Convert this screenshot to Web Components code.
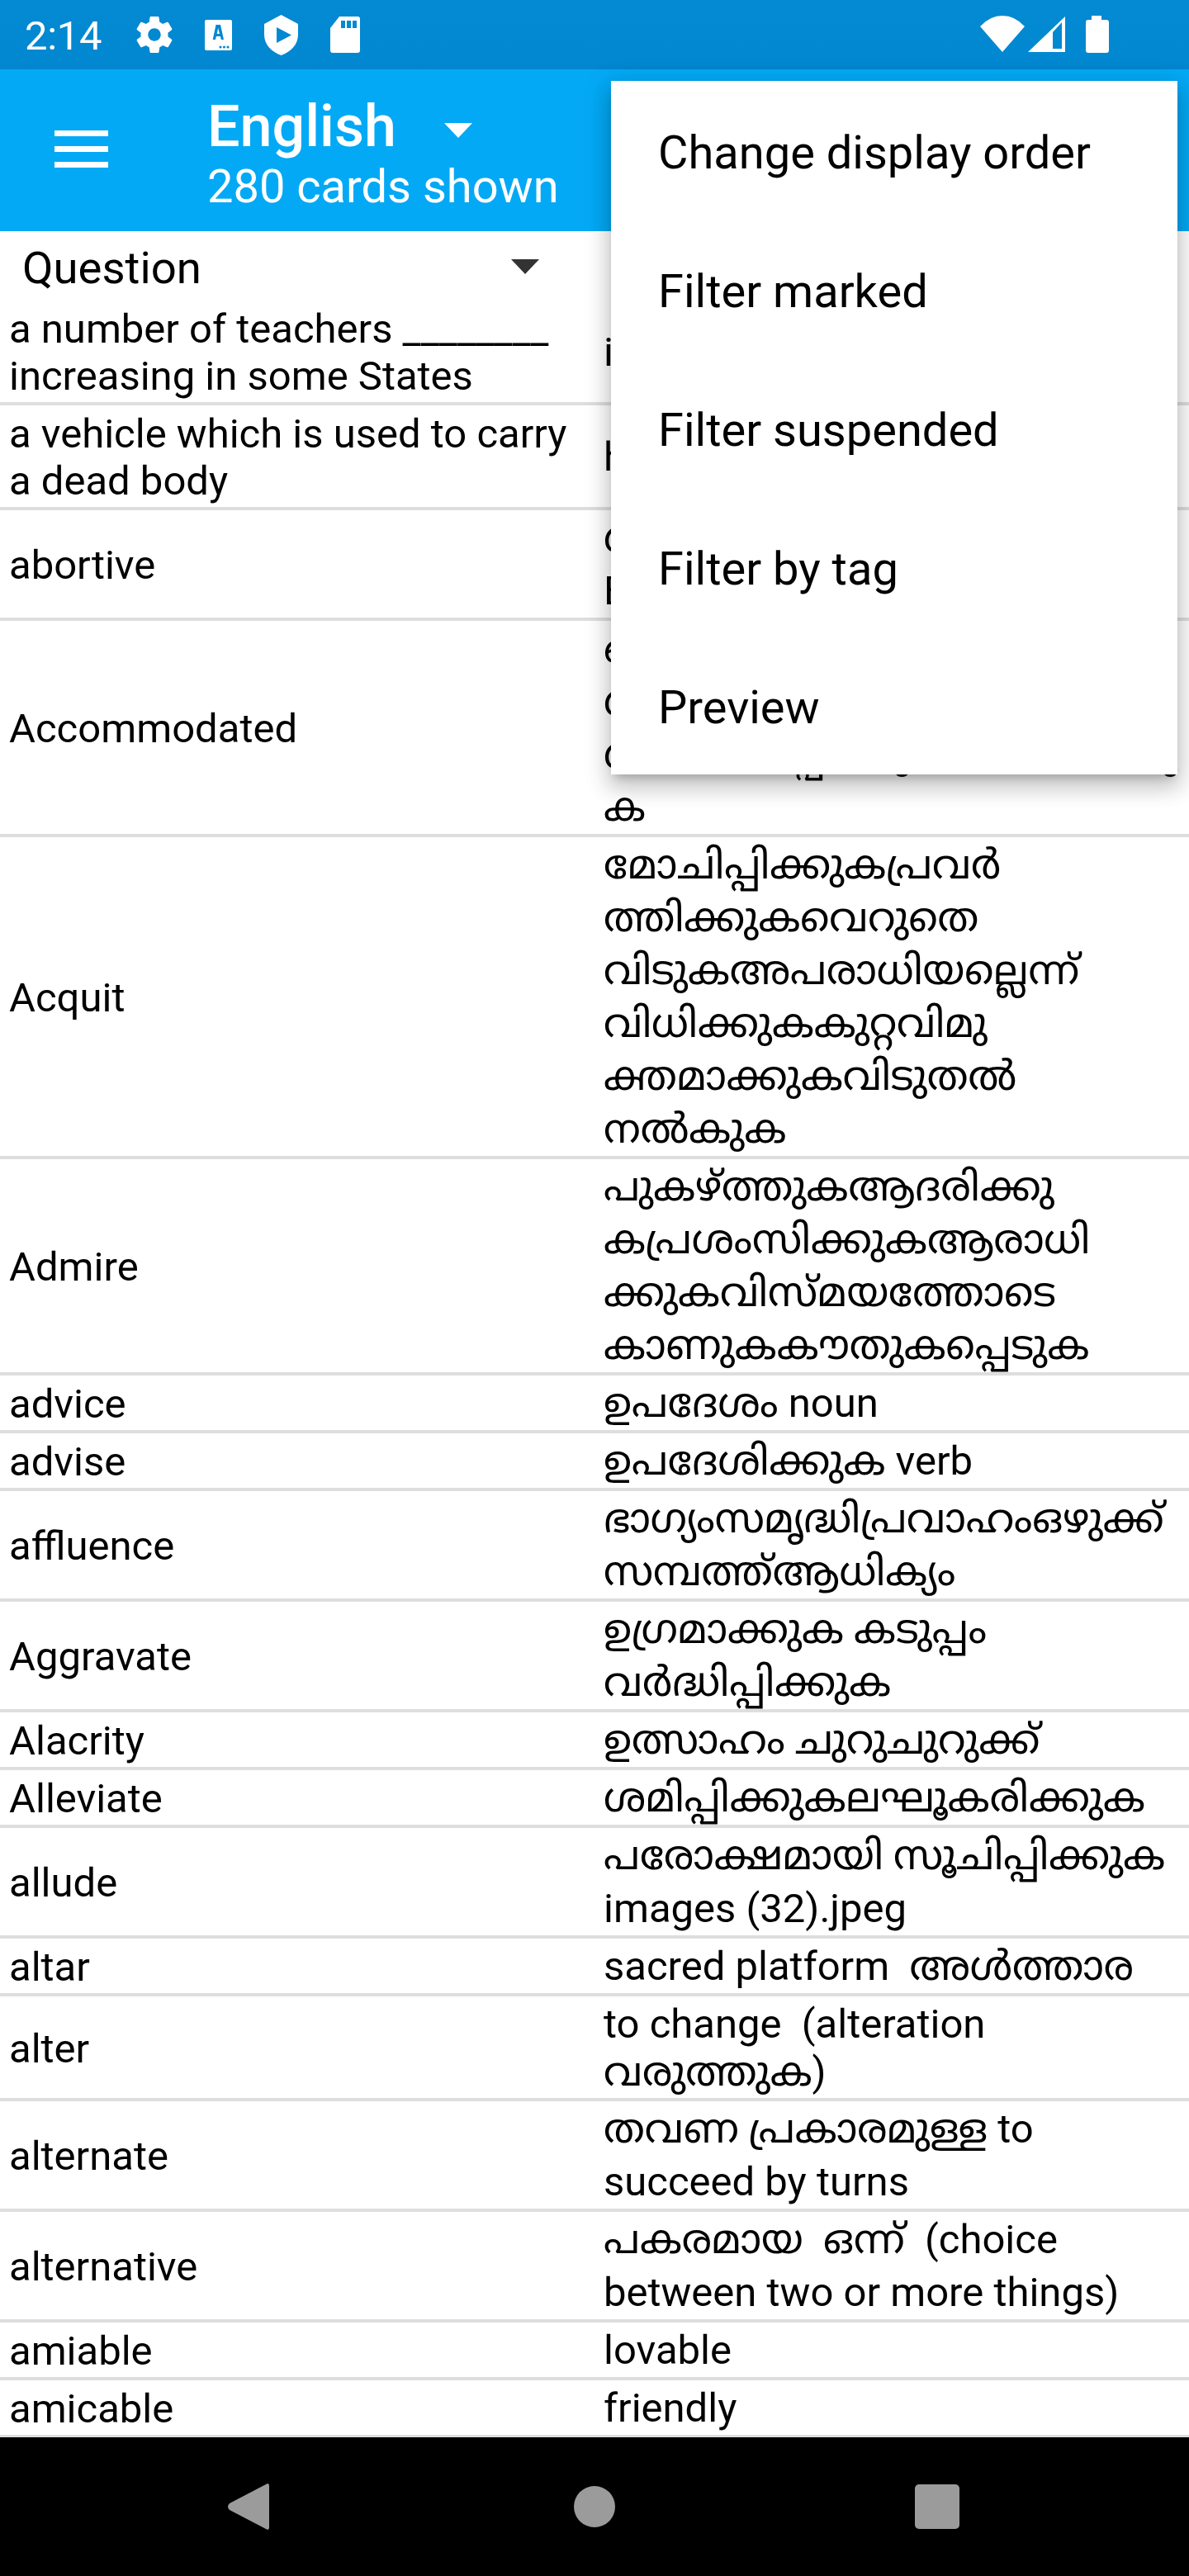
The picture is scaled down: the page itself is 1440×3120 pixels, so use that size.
<!doctype html><html lang="ml"><head><meta charset="utf-8"><style>
html,body{margin:0;width:1440px;height:3120px;background:#fff;overflow:hidden;font-family:Roboto,"Noto Sans Malayalam","Noto Sans",sans-serif;color:#000}
</style></head><body>
<x-phone>
  <x-status-bar></x-status-bar>
  <x-app-bar title="English" subtitle="280 cards shown"></x-app-bar>
  <x-column-header label="Question"></x-column-header>
  <x-card-list>
    <x-card-row style="--h:123px;--lh:57px"><span slot="q">a number of teachers ________<br>increasing in some States</span><span slot="a">is</span></x-card-row>
    <x-card-row style="--h:123px;--lh:57px"><span slot="q">a vehicle which is used to carry<br>a dead body</span><span slot="a">he</span></x-card-row>
    <x-card-row style="--h:130px;--lh:64px"><span slot="q">abortive</span><span slot="a">ഗ<br>E</span></x-card-row>
    <x-card-row style="--h:258px;--lh:64px"><span slot="q">Accommodated</span><span slot="a">ഒ<br>ഗ<br>ഗതാമസിപ്പിക്കുകസൗകര്ക്കു<br>ക</span></x-card-row>
    <x-card-row style="--h:386px;--lh:64px"><span slot="q">Acquit</span><span slot="a">മോചിപ്പിക്കുകപ്രവർ<br>ത്തിക്കുകവെറുതെ<br>വിടുകഅപരാധിയല്ലെന്ന്<br>വിധിക്കുകകുറ്റവിമു<br>ക്തമാക്കുകവിടുതൽ<br>നൽകുക</span></x-card-row>
    <x-card-row style="--h:258px;--lh:64px"><span slot="q">Admire</span><span slot="a">പുകഴ്ത്തുകആദരിക്കു<br>കപ്രശംസിക്കുകആരാധി<br>ക്കുകവിസ്മയത്തോടെ<br>കാണുകകൗതുകപ്പെടുക</span></x-card-row>
    <x-card-row style="--h:66px;--lh:64px"><span slot="q">advice</span><span slot="a">ഉപദേശം noun</span></x-card-row>
    <x-card-row style="--h:66px;--lh:64px"><span slot="q">advise</span><span slot="a">ഉപദേശിക്കുക verb</span></x-card-row>
    <x-card-row style="--h:130px;--lh:64px"><span slot="q">affluence</span><span slot="a">ഭാഗ്യംസമൃദ്ധിപ്രവാഹംഒഴുക്ക്<br>സമ്പത്ത്ആധിക്യം</span></x-card-row>
    <x-card-row style="--h:130px;--lh:64px"><span slot="q">Aggravate</span><span slot="a">ഉഗ്രമാക്കുക കടുപ്പം<br>വർദ്ധിപ്പിക്കുക</span></x-card-row>
    <x-card-row style="--h:66px;--lh:64px"><span slot="q">Alacrity</span><span slot="a">ഉത്സാഹം ചുറുചുറുക്ക്</span></x-card-row>
    <x-card-row style="--h:66px;--lh:64px"><span slot="q">Alleviate</span><span slot="a">ശമിപ്പിക്കുകലഘൂകരിക്കുക</span></x-card-row>
    <x-card-row style="--h:130px;--lh:64px"><span slot="q">allude</span><span slot="a">പരോക്ഷമായി സൂചിപ്പിക്കുക<br>images (32).jpeg</span></x-card-row>
    <x-card-row style="--h:66px;--lh:64px"><span slot="q">altar</span><span slot="a">sacred platform  അൾത്താര</span></x-card-row>
    <x-card-row style="--h:123px;--lh:58px"><span slot="q">alter</span><span slot="a">to change  (alteration<br>വരുത്തുക)</span></x-card-row>
    <x-card-row style="--h:130px;--lh:64px"><span slot="q">alternate</span><span slot="a">തവണ പ്രകാരമുള്ള to<br>succeed by turns</span></x-card-row>
    <x-card-row style="--h:130px;--lh:64px"><span slot="q">alternative</span><span slot="a">പകരമായ  ഒന്ന്  (choice<br>between two or more things)</span></x-card-row>
    <x-card-row style="--h:66px;--lh:64px"><span slot="q">amiable</span><span slot="a">lovable</span></x-card-row>
    <x-card-row style="--h:66px;--lh:64px" last><span slot="q">amicable</span><span slot="a">friendly</span></x-card-row>
  </x-card-list>
  <x-nav-bar></x-nav-bar>
  <x-popup-menu>
    <x-menu-item>Change display order</x-menu-item>
    <x-menu-item>Filter marked</x-menu-item>
    <x-menu-item>Filter suspended</x-menu-item>
    <x-menu-item>Filter by tag</x-menu-item>
    <x-menu-item>Preview</x-menu-item>
  </x-popup-menu>
</x-phone>
<script>
function def(name, html, init){
  customElements.define(name, class extends HTMLElement{
    constructor(){super();this.attachShadow({mode:'open'}).innerHTML=typeof html==='function'?html(this):html;}
    connectedCallback(){if(init)init(this);}
  });
}
def('x-phone',`<style>:host{display:flex;flex-direction:column;position:relative;width:1440px;height:3120px;background:#fff;overflow:hidden}</style><slot></slot>`);

def('x-status-bar',`<style>
:host{display:flex;align-items:flex-start;flex:none;height:84px;background:linear-gradient(#0489d3,#0288d1 88%,#0285ce);color:#fff;box-sizing:border-box;padding-left:30px}
.t{font-size:49px;line-height:84px;margin-top:2px;width:93px;letter-spacing:-.3px;height:82px}
svg{display:block;flex:none;fill:#fff}
</style>
<div class="t">2:14</div>
<svg style="margin:20px 0 0 42px" width="44" height="44" viewBox="2.3 2 19.4 20"><path d="M19.43 12.98c.04-.32.07-.64.07-.98s-.03-.66-.07-.98l2.11-1.65c.19-.15.24-.42.12-.64l-2-3.46c-.12-.22-.39-.3-.61-.22l-2.49 1c-.52-.4-1.08-.73-1.69-.98l-.38-2.65C14.46 2.18 14.25 2 14 2h-4c-.25 0-.46.18-.49.42l-.38 2.65c-.61.25-1.17.59-1.69.98l-2.49-1c-.23-.09-.49 0-.61.22l-2 3.46c-.13.22-.07.49.12.64l2.11 1.65c-.04.32-.07.65-.07.98s.03.66.07.98l-2.11 1.65c-.19.15-.24.42-.12.64l2 3.46c.12.22.39.3.61.22l2.49-1c.52.4 1.08.73 1.69.98l.38 2.65c.03.24.24.42.49.42h4c.25 0 .46-.18.49-.42l.38-2.65c.61-.25 1.17-.59 1.69-.98l2.49 1c.23.09.49 0 .61-.22l2-3.46c.12-.22.07-.49-.12-.64l-2.11-1.65zM12 15.5c-1.93 0-3.5-1.57-3.5-3.5s1.57-3.5 3.5-3.5 3.5 1.57 3.5 3.5-1.57 3.5-3.5 3.5z"/></svg>
<svg style="margin:24px 0 0 39px" width="33" height="37" viewBox="0 0 33 37"><rect width="33" height="37" rx="2"/><path fill="#0488d2" d="M13.5 6h5.500l4 18h-3.200l-.9-4h-5l-1 4H9.700zM16.200 10l-1.500 7h3.200z" fill-rule="evenodd"/><circle cx="19" cy="33" r="1.600" fill="#0488d2"/><circle cx="23.500" cy="33" r="1.600" fill="#0488d2"/><circle cx="28" cy="33" r="1.600" fill="#0488d2"/></svg>
<svg style="margin:18px 0 0 39px" width="41" height="49" viewBox="0 0 41 49"><path fill-rule="evenodd" d="M20.500 0 41 11V24C41 36 32 45 20.500 49 9 45 0 36 0 24V11ZM15 15V34L33 24.500Z"/></svg>
<svg style="margin:20px 0 0 39px" width="36" height="44" viewBox="0 0 36 44"><path fill-rule="evenodd" d="M11 0H33a3 3 0 0 1 3 3V41a3 3 0 0 1-3 3H3a3 3 0 0 1-3-3V14ZM13 5V14H18V5ZM20 5V14H25V5ZM27 5V14H32V5Z"/></svg>
<svg style="margin:19px 0 0 751px" width="54" height="44" viewBox="0 0 54 44"><path d="M27 44 0 13Q12 0 27 0T54 13Z"/></svg>
<svg style="margin:20px 0 0 4px" width="45" height="43" viewBox="0 0 45 43"><path fill-rule="evenodd" d="M45 0V43H0ZM30 19V39H41V7Z"/></svg>
<svg style="margin:19px 0 0 25px" width="28" height="45" viewBox="0 0 28 45"><path d="M7 0H19V5H25a3 3 0 0 1 3 3V42a3 3 0 0 1-3 3H3a3 3 0 0 1-3-3V8a3 3 0 0 1 3-3H7Z"/></svg>`);

def('x-app-bar',t=>`<style>
:host{display:flex;flex:none;height:196px;background:#04a9f5;color:#fff;box-sizing:border-box;position:relative}
.menu{flex:none;width:65px;margin:74px 0 0 66px;display:flex;flex-direction:column;gap:12px}
.menu i{display:block;height:7px;background:#fff}
.txt{margin-left:120px;display:flex;flex-direction:column;padding-top:29px}
.row{display:flex;align-items:flex-start}
.title{font-size:70px;font-weight:500;line-height:80px;width:287px}
.caret{width:0;height:0;border:17.5px solid transparent;border-top:18px solid #fff;border-bottom:0;margin-top:36px}
.sub{font-size:56px;line-height:56px;margin-top:5px}
</style>
<div class="menu"><i></i><i></i><i></i></div>
<div class="txt"><div class="row"><div class="title">${t.getAttribute('title')}</div><div class="caret"></div></div><div class="sub">${t.getAttribute('subtitle')}</div></div>`);

def('x-column-header',t=>`<style>
:host{display:flex;flex:none;height:84px;box-sizing:border-box;padding-left:27px;width:720px;position:relative}
.l{font-size:54.500px;line-height:64px;margin-top:12px;width:592px}
.c{width:0;height:0;border:17.5px solid transparent;border-top:18px solid #333;border-bottom:0;margin-top:34px}
</style><div class="l">${t.getAttribute('label')}</div><div class="c"></div>`);

def('x-card-list',`<style>:host{display:flex;flex-direction:column;flex:none}</style><slot></slot>`);

def('x-card-row',`<style>
:host{display:grid;grid-template-columns:731px 1fr;height:var(--h);border-bottom:4px solid #dedede;font-size:49px;flex:none}
:host([last]){border-bottom-width:3px}
.c{display:flex;flex-direction:column;justify-content:center;line-height:var(--lh);white-space:pre;overflow:hidden}
.q{padding-left:11px;padding-top:3px;line-height:57px}
.a{padding-top:2px}
</style><div class="c q"><div><slot name="q"></slot></div></div><div class="c a"><div><slot name="a"></slot></div></div>`);

def('x-nav-bar',`<style>
:host{display:flex;flex:1;background:#000;position:relative;align-items:center}
svg{display:block;fill:#9b9b9b;flex:none}
</style>
<svg style="margin-left:275px" width="51" height="56" viewBox="0 0 51 56"><path d="M48 0.500Q51-1 51 3V53Q51 57 48 55.500L3 32Q-1 28 3 24Z"/></svg>
<svg style="margin-left:369px" width="50" height="50" viewBox="0 0 50 50"><circle cx="25" cy="25" r="25"/></svg>
<svg style="margin-left:363px" width="54" height="54" viewBox="0 0 54 54"><rect width="54" height="54" rx="5"/></svg>`);

def('x-popup-menu',`<style>
:host{position:absolute;left:740px;top:98px;width:686px;display:flex;flex-direction:column;background:#fff;box-shadow:0 8px 10px -5px rgba(0,0,0,.2),0 16px 24px 2px rgba(0,0,0,.14),0 6px 30px 5px rgba(0,0,0,.12)}
</style><slot></slot>`);

def('x-menu-item',`<style>
:host{display:flex;align-items:center;box-sizing:border-box;height:168px;padding:6px 0 0 57px;font-size:56px;color:#000}
</style><slot></slot>`);
</script></body></html>
